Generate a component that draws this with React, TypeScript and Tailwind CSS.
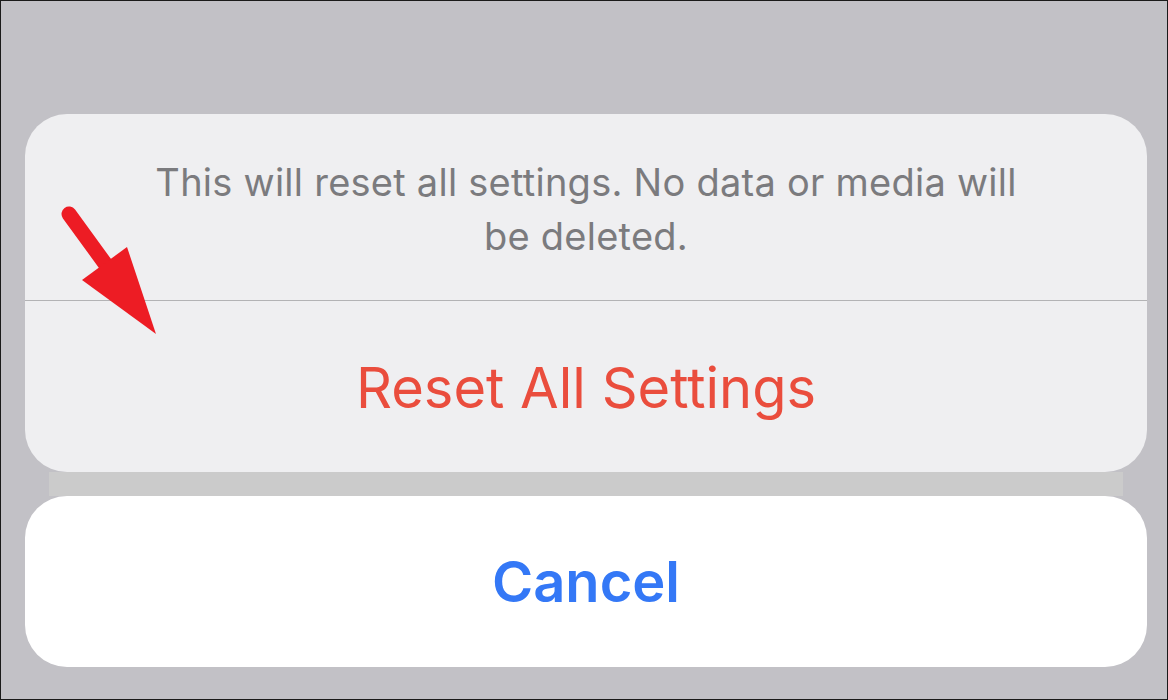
import React from "react";

export default function App() {
  return (
    <div
      className="relative w-[1168px] h-[700px] border border-[#1a1a1a] bg-[#c2c1c6] box-border pl-[24px] pr-[20px] pt-[113px] flex flex-col"
      style={{ fontFamily: "Inter, 'Noto Sans', sans-serif" }}
    >
      <div className="h-[358px] rounded-[42px] bg-[#efeff1] flex flex-col overflow-hidden">
        <div className="h-[186px] flex items-center justify-center pt-[3px]">
          <p className="w-[900px] text-center text-[38px] leading-[54px] tracking-[0.25px] text-[#7b7b7e]">
            This will reset all settings. No data or media will be deleted.
          </p>
        </div>
        <div className="h-px bg-[#b3b3b5]" />
        <div className="flex-1 flex items-center justify-center pt-[2px]">
          <span className="text-[56px] text-[#ea4d3d] leading-none">Reset All Settings</span>
        </div>
      </div>
      <div className="h-[24px] mx-[24px] bg-[#cbcbcb]" />
      <div className="h-[171px] rounded-[42px] bg-white flex items-center justify-center">
        <span className="text-[56px] font-semibold text-[#3478f6] leading-none">Cancel</span>
      </div>

      <svg
        className="absolute left-0 top-0 pointer-events-none"
        width="1168"
        height="700"
        viewBox="0 0 1168 700"
      >
        <line x1="68" y1="213" x2="108" y2="268" stroke="#ed1c24" strokeWidth="15" strokeLinecap="round" />
        <polygon points="81,279 126,246 155,333" fill="#ed1c24" />
      </svg>
    </div>
  );
}
